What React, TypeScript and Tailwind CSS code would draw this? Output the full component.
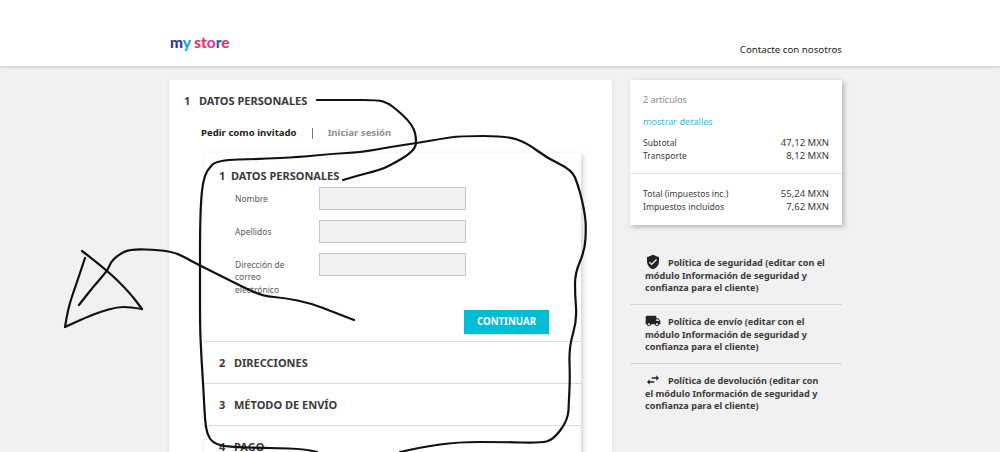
import React from "react";
import { MdVerifiedUser, MdLocalShipping, MdSwapHoriz } from "react-icons/md";

const fields = ["Nombre", "Apellidos", "Dirección de correo electrónico"];

const policies = [
  {
    icon: <MdVerifiedUser className="block w-[16px] h-[16px] text-[#232323]" />,
    text: "Política de seguridad (editar con el módulo Información de seguridad y confianza para el cliente)",
  },
  {
    icon: <MdLocalShipping className="block w-[16px] h-[16px] text-[#232323]" />,
    text: "Política de envío (editar con el módulo Información de seguridad y confianza para el cliente)",
  },
  {
    icon: <MdSwapHoriz className="block w-[16px] h-[16px] text-[#232323]" />,
    text: "Política de devolución (editar con el módulo Información de seguridad y confianza para el cliente)",
  },
];

// hand drawn strokes over the page, as x,y lists
const strokes = [
  "317,100 345,100 378,100 388,103 397,110 408,120 414,129 416,137 416,147 408,155 396,162 385,168 372,172 360,175 343,180",
  "317,452 307,449 270,448 227,447 213,443 207,434 205,420 204,400 203,383 201,350 200,325 200,280 200,230 201,200 203,182 207,170 217,160 260,159 300,157 330,154 363,152 390,147 417,143 440,139 460,136 507,136 527,143 547,158 572,170 578,185 582,200 585,215 586,227 585,250 575,273 575,295 577,320 569,347 570,377 569,400 568,420 553,440 540,443 503,442 457,442 423,447 400,452",
  "354,320 336,313 310,303 285,298 263,296 245,288 223,277 193,262 177,253 160,250 130,249 118,255 110,263 108,270 93,287 79,305",
  "82,251 107,270 130,293 142,309",
  "142,309 130,307 117,307 100,312 87,317 65,327",
  "65,327 68,308 76,285 85,258",
];

const toPath = (s: string) => {
  const pts = s.split(" ").map((p) => p.split(",").map(Number));
  let d = `M${pts[0][0]} ${pts[0][1]}`;
  for (let i = 1; i < pts.length - 1; i++) {
    const mx = (pts[i][0] + pts[i + 1][0]) / 2;
    const my = (pts[i][1] + pts[i + 1][1]) / 2;
    d += ` Q${pts[i][0]} ${pts[i][1]} ${mx} ${my}`;
  }
  const last = pts[pts.length - 1];
  return d + ` L${last[0]} ${last[1]}`;
};

const Row = ({ label, value }: { label: string; value: string }) => (
  <div className="flex justify-between items-center h-[13px] text-[#3a3a3a]">
    <span className="text-[8.6px]">{label}</span>
    <span className="text-[9.5px]">{value}</span>
  </div>
);

const Step = ({ n, title }: { n: string; title: string }) => (
  <div className="h-[42px] border-t border-[#dcdcdc] flex items-center pl-[15px] pt-[1px] text-[11px] font-bold text-[#3a3a3a]">
    <span className="w-[15px]">{n}</span>
    <span>{title}</span>
  </div>
);

const Scribble = () => (
  <svg
    className="absolute left-0 top-0 w-[1000px] h-[452px] pointer-events-none"
    viewBox="0 0 1000 452"
    fill="none"
    stroke="#111"
    strokeWidth="2.2"
    strokeLinejoin="round"
    strokeLinecap="round"
  >
    {strokes.map((s) => (
      <path key={s} d={toPath(s)} />
    ))}
  </svg>
);

export default function App() {
  return (
    <div className="relative w-[1000px] h-[452px] overflow-hidden bg-[#f1f1f1] font-['Noto_Sans',sans-serif]">
      <header className="h-[66px] bg-white shadow-[0_1px_3px_rgba(0,0,0,0.2)] flex items-end justify-between pl-[170px] pr-[158px]">
        <div className="self-start mt-[32px] text-[15.4px] leading-[20px] font-black font-['Lato',sans-serif]">
          <span className="text-[#2a3a9c]">m</span>
          <span className="text-[#0fa5d0]">y </span>
          <span className="text-[#e8336a]">st</span>
          <span className="text-[#d9408f]">o</span>
          <span className="text-[#2a5ab0]">r</span>
          <span className="text-[#e8336a]">e</span>
        </div>
        <a className="mb-[9px] text-[9.7px] leading-[15px] text-[#232323]">Contacte con nosotros</a>
      </header>

      <main className="flex gap-[18px] pl-[169px] pt-[14px]">
        <section className="w-[443px] h-[400px] bg-white shadow-[0_2px_4px_rgba(0,0,0,0.1)] pt-[12px] pl-[15px]">
          <h1 className="flex h-[18px] items-center text-[11px] font-bold text-[#3a3a3a]">
            <span className="w-[15px]">1</span>
            <span>DATOS PERSONALES</span>
          </h1>
          <div className="flex items-center mt-[15px] ml-[17px] h-[16px] text-[9.6px] font-bold">
            <span className="text-[#232323]">Pedir como invitado</span>
            <span className="mx-[15px] h-[11px] border-l border-[#7a7a7a]" />
            <span className="text-[#8f8f8f]">Iniciar sesión</span>
          </div>
          <div className="w-[377px] ml-[20px] mt-[12px] bg-white shadow-[2px_2px_5px_rgba(0,0,0,0.18)]">
            <div className="h-[188px] pt-[14px]">
              <div className="flex items-center h-[18px] pl-[15px] text-[11px] font-bold text-[#3a3a3a]">
                <span className="w-[12px]">1</span>
                <span>DATOS PERSONALES</span>
              </div>
              <div className="flex flex-col gap-[10px] mt-[2px]">
                {fields.map((label) => (
                  <div key={label} className="flex items-start pl-[31px]">
                    <label className="w-[84px] pr-[24px] pt-[6px] text-[8.5px] leading-[12.4px] text-[#5a5a5a]">
                      {label}
                    </label>
                    <div className="w-[147px] h-[23px] bg-[#f1f1f1] border border-[#c8c8c8]" />
                  </div>
                ))}
              </div>
              <div className="flex justify-end pr-[32px] mt-[14px]">
                <button className="w-[85px] h-[24px] bg-[#00bcd4] text-white text-[9.7px] font-bold shadow-[1px_1px_2px_rgba(0,0,0,0.15)]">
                  CONTINUAR
                </button>
              </div>
            </div>
            <Step n="2" title="DIRECCIONES" />
            <Step n="3" title="MÉTODO DE ENVÍO" />
            <Step n="4" title="PAGO" />
          </div>
        </section>

        <aside className="w-[212px]">
          <div className="bg-white shadow-[2px_2px_5px_rgba(0,0,0,0.25)] h-[145px]">
            <div className="h-[94px] px-[13px] pt-[13px] border-b border-[#e0e0e0]">
              <p className="text-[9px] leading-[14px] text-[#8a8a8a]">2 artículos</p>
              <p className="mt-[8px] text-[9.1px] leading-[14px] text-[#2fc0d6]">mostrar detalles</p>
              <div className="mt-[8px]">
                <Row label="Subtotal" value="47,12 MXN" />
                <Row label="Transporte" value="8,12 MXN" />
              </div>
            </div>
            <div className="px-[13px] pt-[14px]">
              <Row label="Total (impuestos inc.)" value="55,24 MXN" />
              <Row label="Impuestos incluidos" value="7,62 MXN" />
            </div>
          </div>
          <div className="mt-[21px]">
            {policies.map((p, i) => (
              <div
                key={p.text}
                className={`px-[15px] pt-[8px] h-[59px] text-[9.1px] leading-[12px] font-bold text-[#3a3a3a] ${i < 2 ? "border-b border-[#d5d5d5]" : ""}`}
              >
                <span className="inline-block w-[23px] h-[16px] align-[-4px]">{p.icon}</span>
                {p.text}
              </div>
            ))}
          </div>
        </aside>
      </main>

      <Scribble />
    </div>
  );
}
